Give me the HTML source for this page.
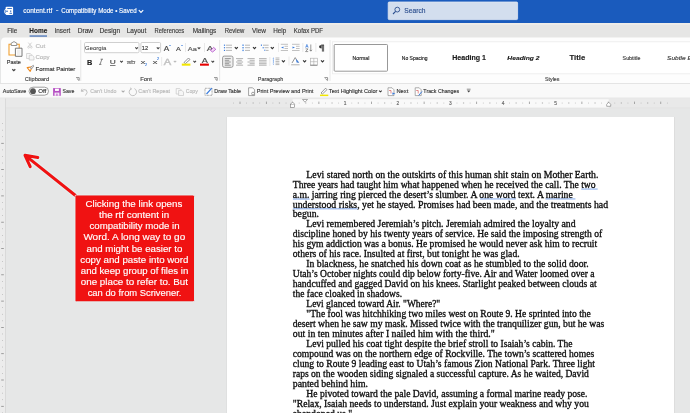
<!DOCTYPE html>
<html><head><meta charset="utf-8">
<style>
*{margin:0;padding:0}
html,body{width:690px;height:413px;overflow:hidden;background:#e6e7e7}
svg{position:absolute;left:0;top:0;display:block;will-change:transform}
text{white-space:pre}
</style></head><body>
<svg width="690" height="413" viewBox="0 0 690 413">
<rect x="0" y="0" width="690" height="413" fill="#e6e7e7" />
<rect x="0" y="0" width="690" height="23" fill="#1a5bbd" />
<rect x="0" y="23" width="690" height="15" fill="#e6e6e5" />
<rect x="0" y="23" width="690" height="1.8" fill="#efede9" />
<path d="M1 42 Q1 37.5 5 37.5 L690 37.5 L690 83 L1 83 Z" fill="#fdfdfd"/>
<rect x="0" y="83" width="690" height="1" fill="#e4e4e4" />
<rect x="0" y="84" width="690" height="14" fill="#f9f9f9" />
<rect x="0" y="97.5" width="690" height="1" fill="#e8e8e8" />
<rect x="227" y="117" width="447" height="300" fill="#ffffff" />
<rect x="226.5" y="117" width="0.5" height="300" fill="#d8d8d8" />
<rect x="674" y="117" width="0.6" height="300" fill="#d8d8d8" />
<rect x="5.6" y="6.8" width="7.5" height="8.1" rx="1" fill="#fff"/>
<rect x="7.1" y="8.2" width="4.8" height="0.8" fill="#1a5bbd" />
<rect x="9.4" y="12.9" width="2.6" height="0.8" fill="#1a5bbd" />
<circle cx="7" cy="11.2" r="0.8" fill="#1a5bbd"/>
<rect x="10.3" y="10.4" width="0.9" height="1.8" fill="#1a5bbd" />
<rect x="4.6" y="9.3" width="4.6" height="4.4" rx="1.5" fill="none" stroke="#fff" stroke-width="0.8"/>
<text x="23.23" y="13.30" font-family="Liberation Sans" font-size="6.8" fill="#ffffff" font-weight="normal" font-style="normal" textLength="29.24" lengthAdjust="spacingAndGlyphs" stroke="#ffffff" stroke-width="0.14">content.rtf</text>
<text x="55.73" y="12.30" font-family="Liberation Sans" font-size="6.8" fill="#ffffff" font-weight="normal" font-style="normal" textLength="2.74" lengthAdjust="spacingAndGlyphs" stroke="#ffffff" stroke-width="0.14">-</text>
<text x="61.23" y="13.30" font-family="Liberation Sans" font-size="6.8" fill="#ffffff" font-weight="normal" font-style="normal" textLength="75.34" lengthAdjust="spacingAndGlyphs" stroke="#ffffff" stroke-width="0.14">Compatibility Mode • Saved</text>
<path d="M138.80 10.10 L141.00 12.30 L143.20 10.10" stroke="#fff" stroke-width="1.1700000000000002" fill="none" />
<rect x="388.2" y="2" width="129.4" height="17.6" rx="1" fill="#d3deee" stroke="#e3e9f3" stroke-width="0.8"/>
<circle cx="397.3" cy="9.6" r="2.4" stroke="#2c4f8f" stroke-width="0.9" fill="none"/>
<path d="M395.6 11.4 L393 14" stroke="#2c4f8f" stroke-width="1.1" fill="none" />
<text x="404.33" y="12.80" font-family="Liberation Sans" font-size="6.8" fill="#2c4f8f" font-weight="normal" font-style="normal" textLength="21.14" lengthAdjust="spacingAndGlyphs" stroke="#2c4f8f" stroke-width="0.14">Search</text>
<text x="7.14" y="33.20" font-family="Liberation Sans" font-size="6.6" fill="#3a3a3a" font-weight="normal" font-style="normal" textLength="10.13" lengthAdjust="spacingAndGlyphs" stroke="#3a3a3a" stroke-width="0.14">File</text>
<text x="29.34" y="33.20" font-family="Liberation Sans" font-size="6.6" fill="#262626" font-weight="bold" font-style="normal" textLength="17.93" lengthAdjust="spacingAndGlyphs" stroke="#262626" stroke-width="0.14">Home</text>
<text x="54.44" y="33.20" font-family="Liberation Sans" font-size="6.6" fill="#3a3a3a" font-weight="normal" font-style="normal" textLength="15.83" lengthAdjust="spacingAndGlyphs" stroke="#3a3a3a" stroke-width="0.14">Insert</text>
<text x="77.74" y="33.20" font-family="Liberation Sans" font-size="6.6" fill="#3a3a3a" font-weight="normal" font-style="normal" textLength="15.33" lengthAdjust="spacingAndGlyphs" stroke="#3a3a3a" stroke-width="0.14">Draw</text>
<text x="99.54" y="33.20" font-family="Liberation Sans" font-size="6.6" fill="#3a3a3a" font-weight="normal" font-style="normal" textLength="20.73" lengthAdjust="spacingAndGlyphs" stroke="#3a3a3a" stroke-width="0.14">Design</text>
<text x="126.74" y="33.20" font-family="Liberation Sans" font-size="6.6" fill="#3a3a3a" font-weight="normal" font-style="normal" textLength="19.53" lengthAdjust="spacingAndGlyphs" stroke="#3a3a3a" stroke-width="0.14">Layout</text>
<text x="154.44" y="33.20" font-family="Liberation Sans" font-size="6.6" fill="#3a3a3a" font-weight="normal" font-style="normal" textLength="29.83" lengthAdjust="spacingAndGlyphs" stroke="#3a3a3a" stroke-width="0.14">References</text>
<text x="192.74" y="33.20" font-family="Liberation Sans" font-size="6.6" fill="#3a3a3a" font-weight="normal" font-style="normal" textLength="23.53" lengthAdjust="spacingAndGlyphs" stroke="#3a3a3a" stroke-width="0.14">Mailings</text>
<text x="224.74" y="33.20" font-family="Liberation Sans" font-size="6.6" fill="#3a3a3a" font-weight="normal" font-style="normal" textLength="19.53" lengthAdjust="spacingAndGlyphs" stroke="#3a3a3a" stroke-width="0.14">Review</text>
<text x="252.04" y="33.20" font-family="Liberation Sans" font-size="6.6" fill="#3a3a3a" font-weight="normal" font-style="normal" textLength="13.93" lengthAdjust="spacingAndGlyphs" stroke="#3a3a3a" stroke-width="0.14">View</text>
<text x="273.24" y="33.20" font-family="Liberation Sans" font-size="6.6" fill="#3a3a3a" font-weight="normal" font-style="normal" textLength="13.03" lengthAdjust="spacingAndGlyphs" stroke="#3a3a3a" stroke-width="0.14">Help</text>
<text x="293.74" y="33.20" font-family="Liberation Sans" font-size="6.6" fill="#3a3a3a" font-weight="normal" font-style="normal" textLength="29.33" lengthAdjust="spacingAndGlyphs" stroke="#3a3a3a" stroke-width="0.14">Kofax PDF</text>
<rect x="29.6" y="35.4" width="17.4" height="1.3" fill="#4a74b8" />
<path d="M9 44.2 H19.2 V55 H9 Z" stroke="#f0a030" stroke-width="1.1" fill="#fff" />
<path d="M11.2 45.5 V43.2 L14 41.6 L16.8 43.2 V45.5 Z" stroke="#7a7a7a" stroke-width="0.8" fill="#fff" />
<path d="M15.4 48.2 H22 V56.3 H15.4 Z" stroke="#6a6a6a" stroke-width="0.9" fill="#fff" />
<rect x="17" y="49.7" width="3.4" height="5.2" fill="#f0f0f0" />
<text x="6.76" y="64.20" font-family="Liberation Sans" font-size="5.9" fill="#333" font-weight="normal" font-style="normal" textLength="14.07" lengthAdjust="spacingAndGlyphs" stroke="#333" stroke-width="0.14">Paste</text>
<path d="M12.30 69.25 L13.80 70.75 L15.30 69.25" stroke="#444" stroke-width="1.1700000000000002" fill="none" />
<path d="M28.3 42.6 L31.6 46.6 M31.6 42.6 L28.3 46.6" stroke="#c2c2c2" stroke-width="0.7" fill="none" />
<circle cx="28.6" cy="47.3" r="0.9" stroke="#c2c2c2" stroke-width="0.6" fill="none"/><circle cx="31.3" cy="47.3" r="0.9" stroke="#c2c2c2" stroke-width="0.6" fill="none"/>
<text x="35.46" y="47.60" font-family="Liberation Sans" font-size="6" fill="#b8b8b8" font-weight="normal" font-style="normal" textLength="9.78" lengthAdjust="spacingAndGlyphs" stroke="#b8b8b8" stroke-width="0.14">Cut</text>
<path d="M26.6 53.5 H30.3 L31.3 54.5 V58.5 H26.6 Z" stroke="#c6c6c6" stroke-width="0.7" fill="#fafafa" />
<path d="M29.2 55.3 H32.4 L34 56.9 V60 H29.2 Z" stroke="#c6c6c6" stroke-width="0.7" fill="#f6f6f6" />
<text x="35.46" y="59.30" font-family="Liberation Sans" font-size="6" fill="#b8b8b8" font-weight="normal" font-style="normal" textLength="14.08" lengthAdjust="spacingAndGlyphs" stroke="#b8b8b8" stroke-width="0.14">Copy</text>
<path d="M27.2 67.6 L32.2 66.8 L30.2 71.4 Z" stroke="#ef8a1e" stroke-width="1.1" fill="#fff" stroke-linejoin="round"/>
<path d="M30.2 67.8 L33.2 65.2 L34 66 L31.4 69 Z" stroke="#777" stroke-width="0.6" fill="#dfe8f5" />
<text x="35.46" y="70.70" font-family="Liberation Sans" font-size="6" fill="#2e2e2e" font-weight="normal" font-style="normal" textLength="39.88" lengthAdjust="spacingAndGlyphs" stroke="#2e2e2e" stroke-width="0.14">Format Painter</text>
<text x="24.88" y="80.70" font-family="Liberation Sans" font-size="5.5" fill="#444" font-weight="normal" font-style="normal" textLength="24.24" lengthAdjust="spacingAndGlyphs" stroke="#444" stroke-width="0.14">Clipboard</text>
<path d="M76 77.6 H79.2 V80.6 M77 78.6 L79 80.5" stroke="#666" stroke-width="0.7" fill="none" />
<rect x="80.4" y="40" width="0.8" height="41" fill="#e1e1e1" />
<rect x="84.5" y="42.5" width="54.5" height="10.2" rx="1.2" fill="#fff" stroke="#c4c4c4" stroke-width="0.8"/>
<text x="84.96" y="50.20" font-family="Liberation Sans" font-size="6" fill="#3a3a3a" font-weight="normal" font-style="normal" textLength="21.48" lengthAdjust="spacingAndGlyphs" stroke="#3a3a3a" stroke-width="0.05">Georgia</text>
<path d="M135.30 47.35 L136.60 48.65 L137.90 47.35" stroke="#444" stroke-width="1.04" fill="none" />
<rect x="140.9" y="42.5" width="19.7" height="10.2" rx="1.2" fill="#fff" stroke="#c4c4c4" stroke-width="0.8"/>
<text x="141.86" y="50.30" font-family="Liberation Sans" font-size="6" fill="#333" font-weight="normal" font-style="normal" textLength="6.28" lengthAdjust="spacingAndGlyphs" stroke="#333" stroke-width="0.14">12</text>
<path d="M156.80 47.35 L158.10 48.65 L159.40 47.35" stroke="#444" stroke-width="1.04" fill="none" />
<text x="163.71" y="50.90" font-family="Liberation Sans" font-size="7.2" fill="#444" font-weight="normal" font-style="normal" textLength="5.48" lengthAdjust="spacingAndGlyphs" stroke="#444" stroke-width="0.14">A</text>
<path d="M169 46 L170 45 L171 46" stroke="#3b7ddd" stroke-width="0.6" fill="none" />
<text x="176.05" y="50.90" font-family="Liberation Sans" font-size="6.2" fill="#444" font-weight="normal" font-style="normal" textLength="4.80" lengthAdjust="spacingAndGlyphs" stroke="#444" stroke-width="0.14">A</text>
<path d="M181 45 L182 46 L183 45" stroke="#3b7ddd" stroke-width="0.6" fill="none" />
<rect x="185.3" y="43" width="0.6" height="9" fill="#dcdcdc" />
<text x="187.75" y="50.60" font-family="Liberation Sans" font-size="6.2" fill="#555" font-weight="normal" font-style="normal" textLength="9.10" lengthAdjust="spacingAndGlyphs" stroke="#555" stroke-width="0.14">Aa</text>
<path d="M197.70 47.35 L199.00 48.65 L200.30 47.35" stroke="#444" stroke-width="1.04" fill="none" />
<rect x="204.4" y="43" width="0.6" height="9" fill="#dcdcdc" />
<text x="206.72" y="50.60" font-family="Liberation Sans" font-size="7" fill="#555" font-weight="normal" font-style="normal" textLength="6.56" lengthAdjust="spacingAndGlyphs" stroke="#555" stroke-width="0.14">A</text>
<path d="M210.5 50.5 L213.6 47.4 L215.8 49.3 L212.6 52 Z" stroke="#b04cc8" stroke-width="0.8" fill="#f3d8f6" />
<text x="86.94" y="64.50" font-family="Liberation Sans" font-size="6.5" fill="#222" font-weight="bold" font-style="normal" textLength="5.32" lengthAdjust="spacingAndGlyphs" stroke="#222" stroke-width="0.14">B</text>
<path d="M101.9 59.2 L100 64.4 M100.6 59.2 H103 M99 64.4 H101.4" stroke="#555" stroke-width="0.7" fill="none" />
<text x="109.75" y="64.00" font-family="Liberation Sans" font-size="6.2" fill="#444" font-weight="normal" font-style="normal" textLength="6.00" lengthAdjust="spacingAndGlyphs" stroke="#444" stroke-width="0.14">U</text>
<rect x="110" y="65" width="5.5" height="0.7" fill="#444" />
<path d="M120.20 60.85 L121.50 62.15 L122.80 60.85" stroke="#444" stroke-width="1.04" fill="none" />
<text x="126.76" y="64.00" font-family="Liberation Sans" font-size="6" fill="#777" font-weight="normal" font-style="normal" textLength="8.68" lengthAdjust="spacingAndGlyphs" stroke="#777" stroke-width="0.14">ab</text>
<rect x="126.8" y="61.2" width="8.6" height="0.6" fill="#777" />
<text x="140.76" y="63.50" font-family="Liberation Sans" font-size="6" fill="#444" font-weight="normal" font-style="normal" textLength="4.48" lengthAdjust="spacingAndGlyphs" stroke="#444" stroke-width="0.14">x</text>
<text x="145.07" y="65.80" font-family="Liberation Sans" font-size="3.2" fill="#3b7ddd" font-weight="normal" font-style="normal" textLength="2.06" lengthAdjust="spacingAndGlyphs" stroke="#3b7ddd" stroke-width="0.14">2</text>
<text x="152.66" y="63.50" font-family="Liberation Sans" font-size="6" fill="#444" font-weight="normal" font-style="normal" textLength="4.58" lengthAdjust="spacingAndGlyphs" stroke="#444" stroke-width="0.14">x</text>
<text x="157.07" y="59.80" font-family="Liberation Sans" font-size="3.2" fill="#3b7ddd" font-weight="normal" font-style="normal" textLength="2.06" lengthAdjust="spacingAndGlyphs" stroke="#3b7ddd" stroke-width="0.14">2</text>
<rect x="161.5" y="57" width="0.6" height="9" fill="#dcdcdc" />
<text x="163.65" y="65.10" font-family="Liberation Sans" font-size="8.8" fill="#c4c4c4" font-weight="normal" font-style="normal" textLength="7.40" lengthAdjust="spacingAndGlyphs" stroke="#c4c4c4" stroke-width="0.5">A</text>
<path d="M173.80 60.90 L175.00 62.10 L176.20 60.90" stroke="#bbb" stroke-width="1.04" fill="none" />
<path d="M184 62.5 L188.5 58 L190 59.5 L185.5 63.5 Z" stroke="#666" stroke-width="0.7" fill="#fff" />
<rect x="181.8" y="63.6" width="8.6" height="2.1" fill="#f2e600" />
<path d="M193.40 60.85 L194.70 62.15 L196.00 60.85" stroke="#444" stroke-width="1.04" fill="none" />
<text x="201.84" y="63.00" font-family="Liberation Sans" font-size="6.5" fill="#444" font-weight="normal" font-style="normal" textLength="6.12" lengthAdjust="spacingAndGlyphs" stroke="#444" stroke-width="0.14">A</text>
<rect x="200" y="63.6" width="8.9" height="2.1" fill="#e60000" />
<path d="M211.50 60.85 L212.80 62.15 L214.10 60.85" stroke="#444" stroke-width="1.04" fill="none" />
<text x="140.18" y="80.70" font-family="Liberation Sans" font-size="5.5" fill="#444" font-weight="normal" font-style="normal" textLength="11.74" lengthAdjust="spacingAndGlyphs" stroke="#444" stroke-width="0.14">Font</text>
<path d="M214 77.6 H217.2 V80.6 M215 78.6 L217 80.5" stroke="#666" stroke-width="0.7" fill="none" />
<rect x="219.3" y="40" width="0.8" height="41" fill="#e1e1e1" />
<rect x="223.9" y="44.6" width="1.2" height="1.2" fill="#3b7ddd" />
<rect x="223.9" y="47.1" width="1.2" height="1.2" fill="#3b7ddd" />
<rect x="223.9" y="49.8" width="1.2" height="1.2" fill="#3b7ddd" />
<path d="M226 45.2 H232 M226 47.7 H232 M226 50.4 H232 " stroke="#9a9a9a" stroke-width="0.7" fill="none" />
<path d="M234.80 47.05 L236.30 48.55 L237.80 47.05" stroke="#333" stroke-width="1.1700000000000002" fill="none" />
<rect x="242.3" y="44.5" width="1.5" height="1.4" fill="#5a95e6" />
<rect x="242.3" y="47.0" width="1.5" height="1.4" fill="#5a95e6" />
<rect x="242.3" y="49.699999999999996" width="1.5" height="1.4" fill="#5a95e6" />
<path d="M245 45.2 H250 M245 47.7 H250 M245 50.4 H250 " stroke="#9a9a9a" stroke-width="0.7" fill="none" />
<path d="M253.00 47.05 L254.50 48.55 L256.00 47.05" stroke="#333" stroke-width="1.1700000000000002" fill="none" />
<rect x="260.9" y="44.5" width="1" height="1.4" fill="#3b7ddd" />
<rect x="262.6" y="47" width="1.2" height="1.4" fill="#5a95e6" />
<rect x="264.3" y="49.6" width="1" height="1.4" fill="#5a95e6" />
<path d="M263 45.2 H268.6 " stroke="#9a9a9a" stroke-width="0.7" fill="none" />
<path d="M264.6 47.7 H268.6 " stroke="#9a9a9a" stroke-width="0.7" fill="none" />
<path d="M265.8 50.4 H268.6 " stroke="#9a9a9a" stroke-width="0.7" fill="none" />
<path d="M270.80 47.05 L272.30 48.55 L273.80 47.05" stroke="#333" stroke-width="1.1700000000000002" fill="none" />
<rect x="278.3" y="43" width="0.6" height="9" fill="#dcdcdc" />
<path d="M280.8 44.3 H288 M280.8 50.5 H288 " stroke="#999" stroke-width="0.6" fill="none" />
<path d="M284.5 46.3 H288 M284.5 48.5 H288 " stroke="#999" stroke-width="0.6" fill="none" />
<path d="M283.5 46.4 L281 47.4 L283.5 48.4 Z" stroke="none" stroke-width="1" fill="#3b7ddd" />
<path d="M292 44.3 H299.6 M292 50.5 H299.6 " stroke="#999" stroke-width="0.6" fill="none" />
<path d="M296 46.3 H299.6 M296 48.5 H299.6 " stroke="#999" stroke-width="0.6" fill="none" />
<path d="M292.5 46.4 L295 47.4 L292.5 48.4 Z" stroke="none" stroke-width="1" fill="#3b7ddd" />
<rect x="302.6" y="43" width="0.6" height="9" fill="#dcdcdc" />
<path d="M305.6 47.6 L306.9 44.4 L308.2 47.6 M306 46.6 H307.8" stroke="#3b7ddd" stroke-width="0.7" fill="none" />
<path d="M305.6 48.9 H308 L305.6 51.6 H308.2" stroke="#555" stroke-width="0.6" fill="none" />
<path d="M310.8 44.5 V51 M309.6 49.8 L310.8 51.2 L312 49.8" stroke="#555" stroke-width="0.6" fill="none" />
<rect x="315.6" y="43" width="0.6" height="9" fill="#dcdcdc" />
<path d="M321.2 45 H324 M322.4 45 V51.6 M323.6 45 V51.6" stroke="#333" stroke-width="0.8" fill="none" />
<path d="M321.6 45 Q319 45.2 319 46.8 Q319 48.4 321.6 48.6 Z" fill="#333"/>
<rect x="222.6" y="56.1" width="10.4" height="11.2" rx="1.6" fill="#f0f0f0" stroke="#8f8f8f" stroke-width="0.9"/>
<path d="M224.8 58.6 H230.8 M224.8 60.3 H229.2 M224.8 62 H230.8 M224.8 63.7 H229.2 M224.8 65.2 H230.8" stroke="#7a7a7a" stroke-width="0.75" fill="none" />
<path d="M236 58.6 H243.1 M237.3 60.3 H241.8 M236 62 H243.1 M237.3 63.7 H241.8 M236 65.2 H243.1" stroke="#999" stroke-width="0.75" fill="none" />
<path d="M247.5 58.6 H254.7 M249.6 60.3 H254.7 M247.5 62 H254.7 M249.6 63.7 H254.7 M247.5 65.2 H254.7" stroke="#999" stroke-width="0.75" fill="none" />
<path d="M259 58.6 H266.6 M259 60.3 H266.6 M259 62 H266.6 M259 63.7 H266.6 M259 65.2 H266.6" stroke="#999" stroke-width="0.75" fill="none" />
<rect x="269.6" y="57" width="0.6" height="9" fill="#dcdcdc" />
<path d="M272.6 58.5 L273.4 57.5 L274.2 58.5 Z" stroke="none" stroke-width="1" fill="#3b7ddd" />
<path d="M272.6 63.7 L273.4 64.7 L274.2 63.7 Z" stroke="none" stroke-width="1" fill="#3b7ddd" />
<rect x="272.9" y="59.5" width="1" height="1.2" fill="#5a95e6" />
<rect x="272.9" y="61.4" width="1" height="1.2" fill="#5a95e6" />
<path d="M275.5 58 H279.4 M275.5 59.7 H279.4 M275.5 61.4 H279.4 M275.5 63.1 H279.4 M275.5 64.6 H279.4 " stroke="#999" stroke-width="0.7" fill="none" />
<path d="M281.90 60.45 L283.40 61.95 L284.90 60.45" stroke="#333" stroke-width="1.1700000000000002" fill="none" />
<rect x="288.7" y="56.5" width="0.6" height="9" fill="#dcdcdc" />
<path d="M292 63 L295.2 57.6 L298.4 63" stroke="#666" stroke-width="0.7" fill="#fff" />
<path d="M296 59 L299.3 62.5 L296.6 62.5 Z" stroke="none" stroke-width="1" fill="#3b7ddd" />
<path d="M291.1 64.8 H299.6 " stroke="#aaa" stroke-width="0.9" fill="none" />
<path d="M303.10 60.45 L304.60 61.95 L306.10 60.45" stroke="#333" stroke-width="1.1700000000000002" fill="none" />
<rect x="310.3" y="58.2" width="7" height="7" fill="none" stroke="#aaa" stroke-width="0.6"/>
<path d="M313.8 58.2 V65.2 M310.3 61.7 H317.3" stroke="#aaa" stroke-width="0.6" fill="none" />
<path d="M310.3 65.2 H317.3" stroke="#777" stroke-width="0.8" fill="none" />
<path d="M321.00 60.45 L322.50 61.95 L324.00 60.45" stroke="#333" stroke-width="1.1700000000000002" fill="none" />
<text x="257.78" y="80.70" font-family="Liberation Sans" font-size="5.5" fill="#444" font-weight="normal" font-style="normal" textLength="25.44" lengthAdjust="spacingAndGlyphs" stroke="#444" stroke-width="0.14">Paragraph</text>
<path d="M324.4 77.6 H327.6 V80.6 M325.4 78.6 L327.4 80.5" stroke="#666" stroke-width="0.7" fill="none" />
<rect x="329.6" y="40" width="0.8" height="41" fill="#e1e1e1" />
<rect x="332.5" y="41.8" width="360" height="32" fill="#fff" stroke="#ececec" stroke-width="0.8"/>
<rect x="334.2" y="44.5" width="53.3" height="26.7" rx="0.8" fill="#fff" stroke="#8c8c8c" stroke-width="0.9"/>
<text x="352.60" y="59.70" font-family="Liberation Sans" font-size="5" fill="#222" font-weight="normal" font-style="normal" textLength="16.70" lengthAdjust="spacingAndGlyphs" stroke="#222" stroke-width="0.14">Normal</text>
<text x="401.80" y="59.70" font-family="Liberation Sans" font-size="5" fill="#222" font-weight="normal" font-style="normal" textLength="25.80" lengthAdjust="spacingAndGlyphs" stroke="#222" stroke-width="0.14">No Spacing</text>
<text x="452.23" y="60.30" font-family="Liberation Sans" font-size="6.8" fill="#1a1a1a" font-weight="bold" font-style="normal" textLength="33.64" lengthAdjust="spacingAndGlyphs" stroke="#1a1a1a" stroke-width="0.14">Heading 1</text>
<text x="507.35" y="60.20" font-family="Liberation Sans" font-size="6.2" fill="#1a1a1a" font-weight="bold" font-style="italic" textLength="32.10" lengthAdjust="spacingAndGlyphs" stroke="#1a1a1a" stroke-width="0.14">Heading 2</text>
<text x="569.50" y="60.30" font-family="Liberation Sans" font-size="7.4" fill="#222" font-weight="bold" font-style="normal" textLength="15.69" lengthAdjust="spacingAndGlyphs" stroke="#222" stroke-width="0.14">Title</text>
<text x="622.62" y="59.70" font-family="Liberation Sans" font-size="4.6" fill="#444" font-weight="normal" font-style="normal" textLength="17.77" lengthAdjust="spacingAndGlyphs" stroke="#444" stroke-width="0.14">Subtitle</text>
<text x="667.02" y="59.70" font-family="Liberation Sans" font-size="4.6" fill="#444" font-weight="normal" font-style="italic" textLength="49.17" lengthAdjust="spacingAndGlyphs" stroke="#444" stroke-width="0.14">Subtle Emphasis</text>
<text x="544.98" y="80.70" font-family="Liberation Sans" font-size="5.5" fill="#444" font-weight="normal" font-style="normal" textLength="14.44" lengthAdjust="spacingAndGlyphs" stroke="#444" stroke-width="0.14">Styles</text>
<text x="2.87" y="93.35" font-family="Liberation Sans" font-size="5.8" fill="#333" font-weight="normal" font-style="normal" textLength="23.46" lengthAdjust="spacingAndGlyphs" stroke="#333" stroke-width="0.14">AutoSave</text>
<rect x="29" y="87.2" width="19.5" height="8" rx="4" fill="#fff" stroke="#777" stroke-width="0.7"/>
<circle cx="33" cy="91.2" r="2.9" fill="#555"/>
<text x="38.29" y="93.20" font-family="Liberation Sans" font-size="5.2" fill="#333" font-weight="normal" font-style="normal" textLength="8.02" lengthAdjust="spacingAndGlyphs" stroke="#333" stroke-width="0.14">Off</text>
<rect x="53.1" y="88.1" width="7.7" height="7.7" fill="#b54fc3" />
<rect x="55" y="88.7" width="3.9" height="2.2" fill="#fff" />
<rect x="54.5" y="92.6" width="4.9" height="3.2" fill="#f4e6f6" />
<rect x="56.4" y="93.6" width="1.1" height="2.2" fill="#b54fc3" />
<text x="62.47" y="93.35" font-family="Liberation Sans" font-size="5.8" fill="#333" font-weight="normal" font-style="normal" textLength="11.86" lengthAdjust="spacingAndGlyphs" stroke="#333" stroke-width="0.14">Save</text>
<path d="M82 88.8 L81.2 91.2 L83.6 91.4 M81.4 91.1 Q84 88.6 86.4 90.2 Q88.4 92.4 85.4 95.6" stroke="#b5b5b5" stroke-width="0.8" fill="none" />
<text x="90.17" y="93.35" font-family="Liberation Sans" font-size="5.8" fill="#b8b8b8" font-weight="normal" font-style="normal" textLength="26.26" lengthAdjust="spacingAndGlyphs" stroke="#b8b8b8" stroke-width="0.14">Can&#x27;t Undo</text>
<path d="M121.70 90.60 L123.10 92.00 L124.50 90.60" stroke="#aaa" stroke-width="1.04" fill="none" />
<path d="M131.3 88.6 A3.7 3.7 0 1 0 134.4 88.6" stroke="#b5b5b5" stroke-width="0.8" fill="none"/>
<path d="M130 87.8 L131.4 88.7 L130.5 90.2" stroke="#b5b5b5" stroke-width="0.7" fill="none" />
<text x="138.27" y="93.35" font-family="Liberation Sans" font-size="5.8" fill="#b8b8b8" font-weight="normal" font-style="normal" textLength="31.76" lengthAdjust="spacingAndGlyphs" stroke="#b8b8b8" stroke-width="0.14">Can&#x27;t Repeat</text>
<path d="M176.2 88.6 H179.8 L180.8 89.6 V94 H176.2 Z" stroke="#c6c6c6" stroke-width="0.7" fill="#fafafa" />
<path d="M178.6 90.4 H181.8 L183.5 92.1 V95.5 H178.6 Z" stroke="#c6c6c6" stroke-width="0.7" fill="#f6f6f6" />
<text x="185.77" y="93.35" font-family="Liberation Sans" font-size="5.8" fill="#b8b8b8" font-weight="normal" font-style="normal" textLength="12.06" lengthAdjust="spacingAndGlyphs" stroke="#b8b8b8" stroke-width="0.14">Copy</text>
<rect x="205" y="88.3" width="7" height="7" fill="#fff" stroke="#555" stroke-width="0.6" stroke-dasharray="0.8 0.6"/>
<path d="M206.5 94 L211.8 88.2" stroke="#3b7ddd" stroke-width="1.2" fill="none" />
<text x="214.27" y="93.35" font-family="Liberation Sans" font-size="5.8" fill="#333" font-weight="normal" font-style="normal" textLength="26.76" lengthAdjust="spacingAndGlyphs" stroke="#333" stroke-width="0.14">Draw Table</text>
<path d="M248.6 87.8 H252.6 L254.6 89.8 V95.6 H248.6 Z" stroke="#666" stroke-width="0.6" fill="#fff" />
<circle cx="253" cy="93.6" r="1.4" stroke="#666" stroke-width="0.6" fill="#fff"/>
<text x="256.77" y="93.35" font-family="Liberation Sans" font-size="5.8" fill="#333" font-weight="normal" font-style="normal" textLength="56.56" lengthAdjust="spacingAndGlyphs" stroke="#333" stroke-width="0.14">Print Preview and Print</text>
<path d="M321 93 L325.6 88.2 L327 89.6 L322.4 94 Z" stroke="#555" stroke-width="0.6" fill="#fff" />
<rect x="320" y="94.6" width="8.3" height="1.5" fill="#f2e600" />
<text x="328.87" y="93.35" font-family="Liberation Sans" font-size="5.8" fill="#333" font-weight="normal" font-style="normal" textLength="48.56" lengthAdjust="spacingAndGlyphs" stroke="#333" stroke-width="0.14">Text Highlight Color</text>
<path d="M379.10 90.55 L380.40 91.85 L381.70 90.55" stroke="#333" stroke-width="1.04" fill="none" />
<path d="M388 87.8 H392 L394 89.8 V95.6 H388 Z" stroke="#777" stroke-width="0.6" fill="#fff" />
<path d="M389 90.5 H391 V93.5" stroke="#d04040" stroke-width="0.6" fill="none" />
<path d="M392.4 92.4 L395.4 93.6 L392.4 94.8 Z" stroke="none" stroke-width="1" fill="#3b7ddd" />
<text x="396.47" y="93.35" font-family="Liberation Sans" font-size="5.8" fill="#333" font-weight="normal" font-style="normal" textLength="11.76" lengthAdjust="spacingAndGlyphs" stroke="#333" stroke-width="0.14">Next</text>
<path d="M415.2 87.8 H419.2 L421.2 89.8 V95.6 H415.2 Z" stroke="#777" stroke-width="0.6" fill="#fff" />
<path d="M416.2 90.5 H418.2 V93.5" stroke="#d04040" stroke-width="0.6" fill="none" />
<path d="M418.6 95.5 L422 91.5" stroke="#3b7ddd" stroke-width="1" fill="none" />
<text x="423.37" y="93.35" font-family="Liberation Sans" font-size="5.8" fill="#333" font-weight="normal" font-style="normal" textLength="35.76" lengthAdjust="spacingAndGlyphs" stroke="#333" stroke-width="0.14">Track Changes</text>
<path d="M466.8 89.2 H470.6" stroke="#444" stroke-width="0.6" fill="none" />
<path d="M467 90.4 L468.7 92.6 L470.4 90.4 Z" stroke="none" stroke-width="1" fill="#444" />
<rect x="0" y="98.5" width="690" height="9.2" fill="#e9e9e9" />
<rect x="0" y="107.6" width="690" height="0.6" fill="#e2e2e2" />
<rect x="292.6" y="99.3" width="316.1" height="8.3" fill="#f9f9f9" />
<rect x="5" y="98.5" width="0.8" height="315" fill="#d6d6d6" />
<rect x="0" y="98.5" width="5" height="315" fill="#ececec" />
<rect x="233.025" y="102.7" width="0.8" height="0.7" fill="#a8a8a8" />
<rect x="239.65000000000003" y="101.6" width="0.7" height="2.4" fill="#888" />
<rect x="246.175" y="102.7" width="0.8" height="0.7" fill="#a8a8a8" />
<rect x="252.55000000000004" y="102.6" width="1.2" height="0.8" fill="#9a9a9a" />
<rect x="259.32500000000005" y="102.7" width="0.8" height="0.7" fill="#a8a8a8" />
<rect x="265.95" y="101.6" width="0.7" height="2.4" fill="#888" />
<rect x="272.475" y="102.7" width="0.8" height="0.7" fill="#a8a8a8" />
<rect x="278.85" y="102.6" width="1.2" height="0.8" fill="#9a9a9a" />
<rect x="285.62500000000006" y="102.7" width="0.8" height="0.7" fill="#a8a8a8" />
<rect x="292.25" y="101.6" width="0.7" height="2.4" fill="#888" />
<rect x="298.77500000000003" y="102.7" width="0.8" height="0.7" fill="#a8a8a8" />
<rect x="305.15" y="102.6" width="1.2" height="0.8" fill="#9a9a9a" />
<rect x="311.92500000000007" y="102.7" width="0.8" height="0.7" fill="#a8a8a8" />
<rect x="318.55" y="101.6" width="0.7" height="2.4" fill="#888" />
<rect x="325.07500000000005" y="102.7" width="0.8" height="0.7" fill="#a8a8a8" />
<rect x="331.45" y="102.6" width="1.2" height="0.8" fill="#9a9a9a" />
<rect x="338.225" y="102.7" width="0.8" height="0.7" fill="#a8a8a8" />
<text x="343.85" y="105.20" font-family="Liberation Sans" font-size="4.6" fill="#666" font-weight="normal" font-style="normal" textLength="2.70" lengthAdjust="spacingAndGlyphs" stroke="#666" stroke-width="0.14">1</text>
<rect x="351.37500000000006" y="102.7" width="0.8" height="0.7" fill="#a8a8a8" />
<rect x="357.75" y="102.6" width="1.2" height="0.8" fill="#9a9a9a" />
<rect x="364.52500000000003" y="102.7" width="0.8" height="0.7" fill="#a8a8a8" />
<rect x="371.15" y="101.6" width="0.7" height="2.4" fill="#888" />
<rect x="377.67500000000007" y="102.7" width="0.8" height="0.7" fill="#a8a8a8" />
<rect x="384.05" y="102.6" width="1.2" height="0.8" fill="#9a9a9a" />
<rect x="390.82500000000005" y="102.7" width="0.8" height="0.7" fill="#a8a8a8" />
<text x="396.45" y="105.20" font-family="Liberation Sans" font-size="4.6" fill="#666" font-weight="normal" font-style="normal" textLength="2.70" lengthAdjust="spacingAndGlyphs" stroke="#666" stroke-width="0.14">2</text>
<rect x="403.975" y="102.7" width="0.8" height="0.7" fill="#a8a8a8" />
<rect x="410.35" y="102.6" width="1.2" height="0.8" fill="#9a9a9a" />
<rect x="417.12500000000006" y="102.7" width="0.8" height="0.7" fill="#a8a8a8" />
<rect x="423.75" y="101.6" width="0.7" height="2.4" fill="#888" />
<rect x="430.2750000000001" y="102.7" width="0.8" height="0.7" fill="#a8a8a8" />
<rect x="436.65" y="102.6" width="1.2" height="0.8" fill="#9a9a9a" />
<rect x="443.42500000000007" y="102.7" width="0.8" height="0.7" fill="#a8a8a8" />
<text x="449.05" y="105.20" font-family="Liberation Sans" font-size="4.6" fill="#666" font-weight="normal" font-style="normal" textLength="2.70" lengthAdjust="spacingAndGlyphs" stroke="#666" stroke-width="0.14">3</text>
<rect x="456.57500000000005" y="102.7" width="0.8" height="0.7" fill="#a8a8a8" />
<rect x="462.95000000000005" y="102.6" width="1.2" height="0.8" fill="#9a9a9a" />
<rect x="469.725" y="102.7" width="0.8" height="0.7" fill="#a8a8a8" />
<rect x="476.35" y="101.6" width="0.7" height="2.4" fill="#888" />
<rect x="482.87500000000006" y="102.7" width="0.8" height="0.7" fill="#a8a8a8" />
<rect x="489.25" y="102.6" width="1.2" height="0.8" fill="#9a9a9a" />
<rect x="496.0250000000001" y="102.7" width="0.8" height="0.7" fill="#a8a8a8" />
<text x="501.65" y="105.20" font-family="Liberation Sans" font-size="4.6" fill="#666" font-weight="normal" font-style="normal" textLength="2.70" lengthAdjust="spacingAndGlyphs" stroke="#666" stroke-width="0.14">4</text>
<rect x="509.17500000000007" y="102.7" width="0.8" height="0.7" fill="#a8a8a8" />
<rect x="515.5500000000001" y="102.6" width="1.2" height="0.8" fill="#9a9a9a" />
<rect x="522.325" y="102.7" width="0.8" height="0.7" fill="#a8a8a8" />
<rect x="528.95" y="101.6" width="0.7" height="2.4" fill="#888" />
<rect x="535.475" y="102.7" width="0.8" height="0.7" fill="#a8a8a8" />
<rect x="541.85" y="102.6" width="1.2" height="0.8" fill="#9a9a9a" />
<rect x="548.6250000000001" y="102.7" width="0.8" height="0.7" fill="#a8a8a8" />
<text x="554.25" y="105.20" font-family="Liberation Sans" font-size="4.6" fill="#666" font-weight="normal" font-style="normal" textLength="2.70" lengthAdjust="spacingAndGlyphs" stroke="#666" stroke-width="0.14">5</text>
<rect x="561.775" y="102.7" width="0.8" height="0.7" fill="#a8a8a8" />
<rect x="568.15" y="102.6" width="1.2" height="0.8" fill="#9a9a9a" />
<rect x="574.9250000000001" y="102.7" width="0.8" height="0.7" fill="#a8a8a8" />
<rect x="581.5500000000001" y="101.6" width="0.7" height="2.4" fill="#888" />
<rect x="588.075" y="102.7" width="0.8" height="0.7" fill="#a8a8a8" />
<rect x="594.4499999999999" y="102.6" width="1.2" height="0.8" fill="#9a9a9a" />
<rect x="601.225" y="102.7" width="0.8" height="0.7" fill="#a8a8a8" />
<rect x="607.85" y="101.6" width="0.7" height="2.4" fill="#888" />
<rect x="614.3750000000001" y="102.7" width="0.8" height="0.7" fill="#a8a8a8" />
<rect x="620.75" y="102.6" width="1.2" height="0.8" fill="#9a9a9a" />
<rect x="627.525" y="102.7" width="0.8" height="0.7" fill="#a8a8a8" />
<rect x="634.15" y="101.6" width="0.7" height="2.4" fill="#888" />
<rect x="640.6750000000001" y="102.7" width="0.8" height="0.7" fill="#a8a8a8" />
<rect x="647.0500000000001" y="102.6" width="1.2" height="0.8" fill="#9a9a9a" />
<rect x="653.825" y="102.7" width="0.8" height="0.7" fill="#a8a8a8" />
<rect x="660.4499999999999" y="101.6" width="0.7" height="2.4" fill="#888" />
<rect x="666.975" y="102.7" width="0.8" height="0.7" fill="#a8a8a8" />
<rect x="2" y="123.22500000000001" width="0.8" height="0.7" fill="#a8a8a8" />
<rect x="2" y="129.8" width="0.8" height="0.7" fill="#a8a8a8" />
<rect x="2" y="136.375" width="0.8" height="0.7" fill="#a8a8a8" />
<rect x="1.2" y="142.9" width="2.6" height="0.8" fill="#888" />
<rect x="2" y="149.525" width="0.8" height="0.7" fill="#a8a8a8" />
<rect x="2" y="156.1" width="0.8" height="0.7" fill="#a8a8a8" />
<rect x="2" y="162.675" width="0.8" height="0.7" fill="#a8a8a8" />
<rect x="1.2" y="169.2" width="2.6" height="0.8" fill="#888" />
<rect x="2" y="175.82500000000002" width="0.8" height="0.7" fill="#a8a8a8" />
<rect x="2" y="182.4" width="0.8" height="0.7" fill="#a8a8a8" />
<rect x="2" y="188.975" width="0.8" height="0.7" fill="#a8a8a8" />
<rect x="1.2" y="195.5" width="2.6" height="0.8" fill="#888" />
<rect x="2" y="202.12500000000003" width="0.8" height="0.7" fill="#a8a8a8" />
<rect x="2" y="208.70000000000002" width="0.8" height="0.7" fill="#a8a8a8" />
<rect x="2" y="215.275" width="0.8" height="0.7" fill="#a8a8a8" />
<rect x="1.2" y="221.79999999999998" width="2.6" height="0.8" fill="#888" />
<rect x="2" y="228.425" width="0.8" height="0.7" fill="#a8a8a8" />
<rect x="2" y="235.00000000000003" width="0.8" height="0.7" fill="#a8a8a8" />
<rect x="2" y="241.57500000000002" width="0.8" height="0.7" fill="#a8a8a8" />
<rect x="1.2" y="248.1" width="2.6" height="0.8" fill="#888" />
<rect x="2" y="254.72500000000002" width="0.8" height="0.7" fill="#a8a8a8" />
<rect x="2" y="261.29999999999995" width="0.8" height="0.7" fill="#a8a8a8" />
<rect x="2" y="267.875" width="0.8" height="0.7" fill="#a8a8a8" />
<rect x="1.2" y="274.40000000000003" width="2.6" height="0.8" fill="#888" />
<rect x="2" y="281.025" width="0.8" height="0.7" fill="#a8a8a8" />
<rect x="2" y="287.6" width="0.8" height="0.7" fill="#a8a8a8" />
<rect x="2" y="294.17499999999995" width="0.8" height="0.7" fill="#a8a8a8" />
<rect x="1.2" y="300.70000000000005" width="2.6" height="0.8" fill="#888" />
<rect x="2" y="307.325" width="0.8" height="0.7" fill="#a8a8a8" />
<rect x="2" y="313.9" width="0.8" height="0.7" fill="#a8a8a8" />
<rect x="2" y="320.475" width="0.8" height="0.7" fill="#a8a8a8" />
<rect x="1.2" y="327.0" width="2.6" height="0.8" fill="#888" />
<rect x="2" y="333.625" width="0.8" height="0.7" fill="#a8a8a8" />
<rect x="2" y="340.2" width="0.8" height="0.7" fill="#a8a8a8" />
<rect x="2" y="346.775" width="0.8" height="0.7" fill="#a8a8a8" />
<rect x="1.2" y="353.30000000000007" width="2.6" height="0.8" fill="#888" />
<rect x="2" y="359.92499999999995" width="0.8" height="0.7" fill="#a8a8a8" />
<rect x="2" y="366.5" width="0.8" height="0.7" fill="#a8a8a8" />
<rect x="2" y="373.075" width="0.8" height="0.7" fill="#a8a8a8" />
<rect x="1.2" y="379.6" width="2.6" height="0.8" fill="#888" />
<rect x="2" y="386.22499999999997" width="0.8" height="0.7" fill="#a8a8a8" />
<rect x="2" y="392.8" width="0.8" height="0.7" fill="#a8a8a8" />
<rect x="2" y="399.375" width="0.8" height="0.7" fill="#a8a8a8" />
<rect x="1.2" y="405.90000000000003" width="2.6" height="0.8" fill="#888" />
<rect x="2" y="412.525" width="0.8" height="0.7" fill="#a8a8a8" />
<path d="M302.5 99.5 H307.5 L305 102.2 Z" stroke="#777" stroke-width="0.6" fill="#fff" />
<rect x="290.6" y="104.2" width="4" height="3.2" fill="#fff" stroke="#777" stroke-width="0.6"/>
<path d="M290.6 104.2 L292.6 102 L294.6 104.2" stroke="#777" stroke-width="0.6" fill="#fff" />
<path d="M606.7 104.3 L608.7 102.2 L610.7 104.3 V106.3 H606.7 Z" stroke="#777" stroke-width="0.6" fill="#fff" />
<g font-family="Liberation Serif" font-size="9.7" fill="#1c1c1c">
<text x="306.35" y="177.60" font-family="Liberation Serif" font-size="9.9" fill="#0e0e0e" font-weight="normal" font-style="normal" textLength="292.10" lengthAdjust="spacingAndGlyphs" stroke="#0e0e0e" stroke-width="0.32">Levi stared north on the outskirts of this human shit stain on Mother Earth.</text>
<text x="292.75" y="187.57" font-family="Liberation Serif" font-size="9.9" fill="#0e0e0e" font-weight="normal" font-style="normal" textLength="302.90" lengthAdjust="spacingAndGlyphs" stroke="#0e0e0e" stroke-width="0.32">Three years had taught him what happened when he received the call. The two</text>
<text x="292.75" y="197.54" font-family="Liberation Serif" font-size="9.9" fill="#0e0e0e" font-weight="normal" font-style="normal" textLength="280.00" lengthAdjust="spacingAndGlyphs" stroke="#0e0e0e" stroke-width="0.32">a.m. jarring ring pierced the desert’s slumber. A one word text. A marine</text>
<text x="292.75" y="207.50" font-family="Liberation Serif" font-size="9.9" fill="#0e0e0e" font-weight="normal" font-style="normal" textLength="315.30" lengthAdjust="spacingAndGlyphs" stroke="#0e0e0e" stroke-width="0.32">understood risks, yet he stayed. Promises had been made, and the treatments had</text>
<text x="292.75" y="217.47" font-family="Liberation Serif" font-size="9.9" fill="#0e0e0e" font-weight="normal" font-style="normal" textLength="26.20" lengthAdjust="spacingAndGlyphs" stroke="#0e0e0e" stroke-width="0.32">begun.</text>
<text x="306.35" y="227.44" font-family="Liberation Serif" font-size="9.9" fill="#0e0e0e" font-weight="normal" font-style="normal" textLength="269.20" lengthAdjust="spacingAndGlyphs" stroke="#0e0e0e" stroke-width="0.32">Levi remembered Jeremiah’s pitch. Jeremiah admired the loyalty and</text>
<text x="292.75" y="237.41" font-family="Liberation Serif" font-size="9.9" fill="#0e0e0e" font-weight="normal" font-style="normal" textLength="309.40" lengthAdjust="spacingAndGlyphs" stroke="#0e0e0e" stroke-width="0.32">discipline honed by his twenty years of service. He said the imposing strength of</text>
<text x="292.75" y="247.38" font-family="Liberation Serif" font-size="9.9" fill="#0e0e0e" font-weight="normal" font-style="normal" textLength="304.40" lengthAdjust="spacingAndGlyphs" stroke="#0e0e0e" stroke-width="0.32">his gym addiction was a bonus. He promised he would never ask him to recruit</text>
<text x="292.75" y="257.34" font-family="Liberation Serif" font-size="9.9" fill="#0e0e0e" font-weight="normal" font-style="normal" textLength="226.90" lengthAdjust="spacingAndGlyphs" stroke="#0e0e0e" stroke-width="0.32">others of his race. Insulted at first, but tonight he was glad.</text>
<text x="306.35" y="267.31" font-family="Liberation Serif" font-size="9.9" fill="#0e0e0e" font-weight="normal" font-style="normal" textLength="282.30" lengthAdjust="spacingAndGlyphs" stroke="#0e0e0e" stroke-width="0.32">In blackness, he snatched his down coat as he stumbled to the solid door.</text>
<text x="292.75" y="277.28" font-family="Liberation Serif" font-size="9.9" fill="#0e0e0e" font-weight="normal" font-style="normal" textLength="301.80" lengthAdjust="spacingAndGlyphs" stroke="#0e0e0e" stroke-width="0.32">Utah’s October nights could dip below forty-five. Air and Water loomed over a</text>
<text x="292.75" y="287.25" font-family="Liberation Serif" font-size="9.9" fill="#0e0e0e" font-weight="normal" font-style="normal" textLength="303.90" lengthAdjust="spacingAndGlyphs" stroke="#0e0e0e" stroke-width="0.32">handcuffed and gagged David on his knees. Starlight peaked between clouds at</text>
<text x="292.75" y="297.22" font-family="Liberation Serif" font-size="9.9" fill="#0e0e0e" font-weight="normal" font-style="normal" textLength="109.30" lengthAdjust="spacingAndGlyphs" stroke="#0e0e0e" stroke-width="0.32">the face cloaked in shadows.</text>
<text x="306.35" y="307.18" font-family="Liberation Serif" font-size="9.9" fill="#0e0e0e" font-weight="normal" font-style="normal" textLength="133.90" lengthAdjust="spacingAndGlyphs" stroke="#0e0e0e" stroke-width="0.32">Levi glanced toward Air. &quot;Where?&quot;</text>
<text x="306.35" y="317.15" font-family="Liberation Serif" font-size="9.9" fill="#0e0e0e" font-weight="normal" font-style="normal" textLength="284.50" lengthAdjust="spacingAndGlyphs" stroke="#0e0e0e" stroke-width="0.32">&quot;The fool was hitchhiking two miles west on Route 9. He sprinted into the</text>
<text x="292.75" y="327.12" font-family="Liberation Serif" font-size="9.9" fill="#0e0e0e" font-weight="normal" font-style="normal" textLength="311.50" lengthAdjust="spacingAndGlyphs" stroke="#0e0e0e" stroke-width="0.32">desert when he saw my mask. Missed twice with the tranquilizer gun, but he was</text>
<text x="292.75" y="337.09" font-family="Liberation Serif" font-size="9.9" fill="#0e0e0e" font-weight="normal" font-style="normal" textLength="202.00" lengthAdjust="spacingAndGlyphs" stroke="#0e0e0e" stroke-width="0.32">out in ten minutes after I nailed him with the third.&quot;</text>
<text x="306.35" y="347.06" font-family="Liberation Serif" font-size="9.9" fill="#0e0e0e" font-weight="normal" font-style="normal" textLength="266.10" lengthAdjust="spacingAndGlyphs" stroke="#0e0e0e" stroke-width="0.32">Levi pulled his coat tight despite the brief stroll to Isaiah’s cabin. The</text>
<text x="292.75" y="357.02" font-family="Liberation Serif" font-size="9.9" fill="#0e0e0e" font-weight="normal" font-style="normal" textLength="301.40" lengthAdjust="spacingAndGlyphs" stroke="#0e0e0e" stroke-width="0.32">compound was on the northern edge of Rockville. The town’s scattered homes</text>
<text x="292.75" y="366.99" font-family="Liberation Serif" font-size="9.9" fill="#0e0e0e" font-weight="normal" font-style="normal" textLength="302.20" lengthAdjust="spacingAndGlyphs" stroke="#0e0e0e" stroke-width="0.32">clung to Route 9 leading east to Utah’s famous Zion National Park. Three light</text>
<text x="292.75" y="376.96" font-family="Liberation Serif" font-size="9.9" fill="#0e0e0e" font-weight="normal" font-style="normal" textLength="296.10" lengthAdjust="spacingAndGlyphs" stroke="#0e0e0e" stroke-width="0.32">raps on the wooden siding signaled a successful capture. As he waited, David</text>
<text x="292.75" y="386.93" font-family="Liberation Serif" font-size="9.9" fill="#0e0e0e" font-weight="normal" font-style="normal" textLength="75.30" lengthAdjust="spacingAndGlyphs" stroke="#0e0e0e" stroke-width="0.32">panted behind him.</text>
<text x="306.35" y="396.90" font-family="Liberation Serif" font-size="9.9" fill="#0e0e0e" font-weight="normal" font-style="normal" textLength="281.10" lengthAdjust="spacingAndGlyphs" stroke="#0e0e0e" stroke-width="0.32">He pivoted toward the pale David, assuming a formal marine ready pose.</text>
<text x="292.75" y="406.86" font-family="Liberation Serif" font-size="9.9" fill="#0e0e0e" font-weight="normal" font-style="normal" textLength="296.10" lengthAdjust="spacingAndGlyphs" stroke="#0e0e0e" stroke-width="0.32">&quot;Relax, Isaiah needs to understand. Just explain your weakness and why you</text>
<text x="292.75" y="416.83" font-family="Liberation Serif" font-size="9.9" fill="#0e0e0e" font-weight="normal" font-style="normal" textLength="59.50" lengthAdjust="spacingAndGlyphs" stroke="#0e0e0e" stroke-width="0.32">abandoned us.&quot;</text>
</g>
<rect x="581.2" y="188.6" width="16.5" height="0.9" fill="#74a0ea" />
<rect x="292.9" y="198.6" width="16.80000000000001" height="0.9" fill="#74a0ea" />
<rect x="480.1" y="198.5" width="35.69999999999993" height="0.9" fill="#74a0ea" />
<rect x="545.5" y="198.5" width="29.899999999999977" height="0.9" fill="#74a0ea" />
<rect x="292.9" y="208.4" width="64.90000000000003" height="0.9" fill="#74a0ea" />
<path d="M75.5 195.5 L25.8 155.8 M37.8 157.6 L25 155.3 L30.2 166.6" stroke="#e4f2f2" stroke-width="5" fill="none" stroke-linecap="round" stroke-linejoin="round"/>
<path d="M75.5 195.5 L25.8 155.8 M37.8 157.6 L25 155.3 L30.2 166.6" stroke="#f01212" stroke-width="3" fill="none" stroke-linecap="round" stroke-linejoin="round"/>
<rect x="75" y="195" width="119.5" height="106.8" rx="1.5" fill="#f01212" stroke="#e4f2f2" stroke-width="0.9"/>
<text x="85.50" y="206.80" font-family="Liberation Sans" font-size="9.6" fill="#ffffff" font-weight="normal" font-style="normal" textLength="96.80" lengthAdjust="spacingAndGlyphs" stroke="#ffffff" stroke-width="0.14">Clicking the link opens</text>
<text x="99.00" y="218.01" font-family="Liberation Sans" font-size="9.6" fill="#ffffff" font-weight="normal" font-style="normal" textLength="70.20" lengthAdjust="spacingAndGlyphs" stroke="#ffffff" stroke-width="0.14">the rtf content in</text>
<text x="89.50" y="229.22" font-family="Liberation Sans" font-size="9.6" fill="#ffffff" font-weight="normal" font-style="normal" textLength="90.10" lengthAdjust="spacingAndGlyphs" stroke="#ffffff" stroke-width="0.14">compatibility mode in</text>
<text x="83.40" y="240.43" font-family="Liberation Sans" font-size="9.6" fill="#ffffff" font-weight="normal" font-style="normal" textLength="101.80" lengthAdjust="spacingAndGlyphs" stroke="#ffffff" stroke-width="0.14">Word. A long way to go</text>
<text x="86.50" y="251.64" font-family="Liberation Sans" font-size="9.6" fill="#ffffff" font-weight="normal" font-style="normal" textLength="95.80" lengthAdjust="spacingAndGlyphs" stroke="#ffffff" stroke-width="0.14">and might be easier to</text>
<text x="80.30" y="262.85" font-family="Liberation Sans" font-size="9.6" fill="#ffffff" font-weight="normal" font-style="normal" textLength="108.00" lengthAdjust="spacingAndGlyphs" stroke="#ffffff" stroke-width="0.14">copy and paste into word</text>
<text x="80.80" y="274.06" font-family="Liberation Sans" font-size="9.6" fill="#ffffff" font-weight="normal" font-style="normal" textLength="107.50" lengthAdjust="spacingAndGlyphs" stroke="#ffffff" stroke-width="0.14">and keep group of files in</text>
<text x="80.80" y="285.27" font-family="Liberation Sans" font-size="9.6" fill="#ffffff" font-weight="normal" font-style="normal" textLength="107.20" lengthAdjust="spacingAndGlyphs" stroke="#ffffff" stroke-width="0.14">one place to refer to. But</text>
<text x="87.70" y="296.48" font-family="Liberation Sans" font-size="9.6" fill="#ffffff" font-weight="normal" font-style="normal" textLength="93.70" lengthAdjust="spacingAndGlyphs" stroke="#ffffff" stroke-width="0.14">can do from Scrivener.</text>
</svg>
</body></html>
